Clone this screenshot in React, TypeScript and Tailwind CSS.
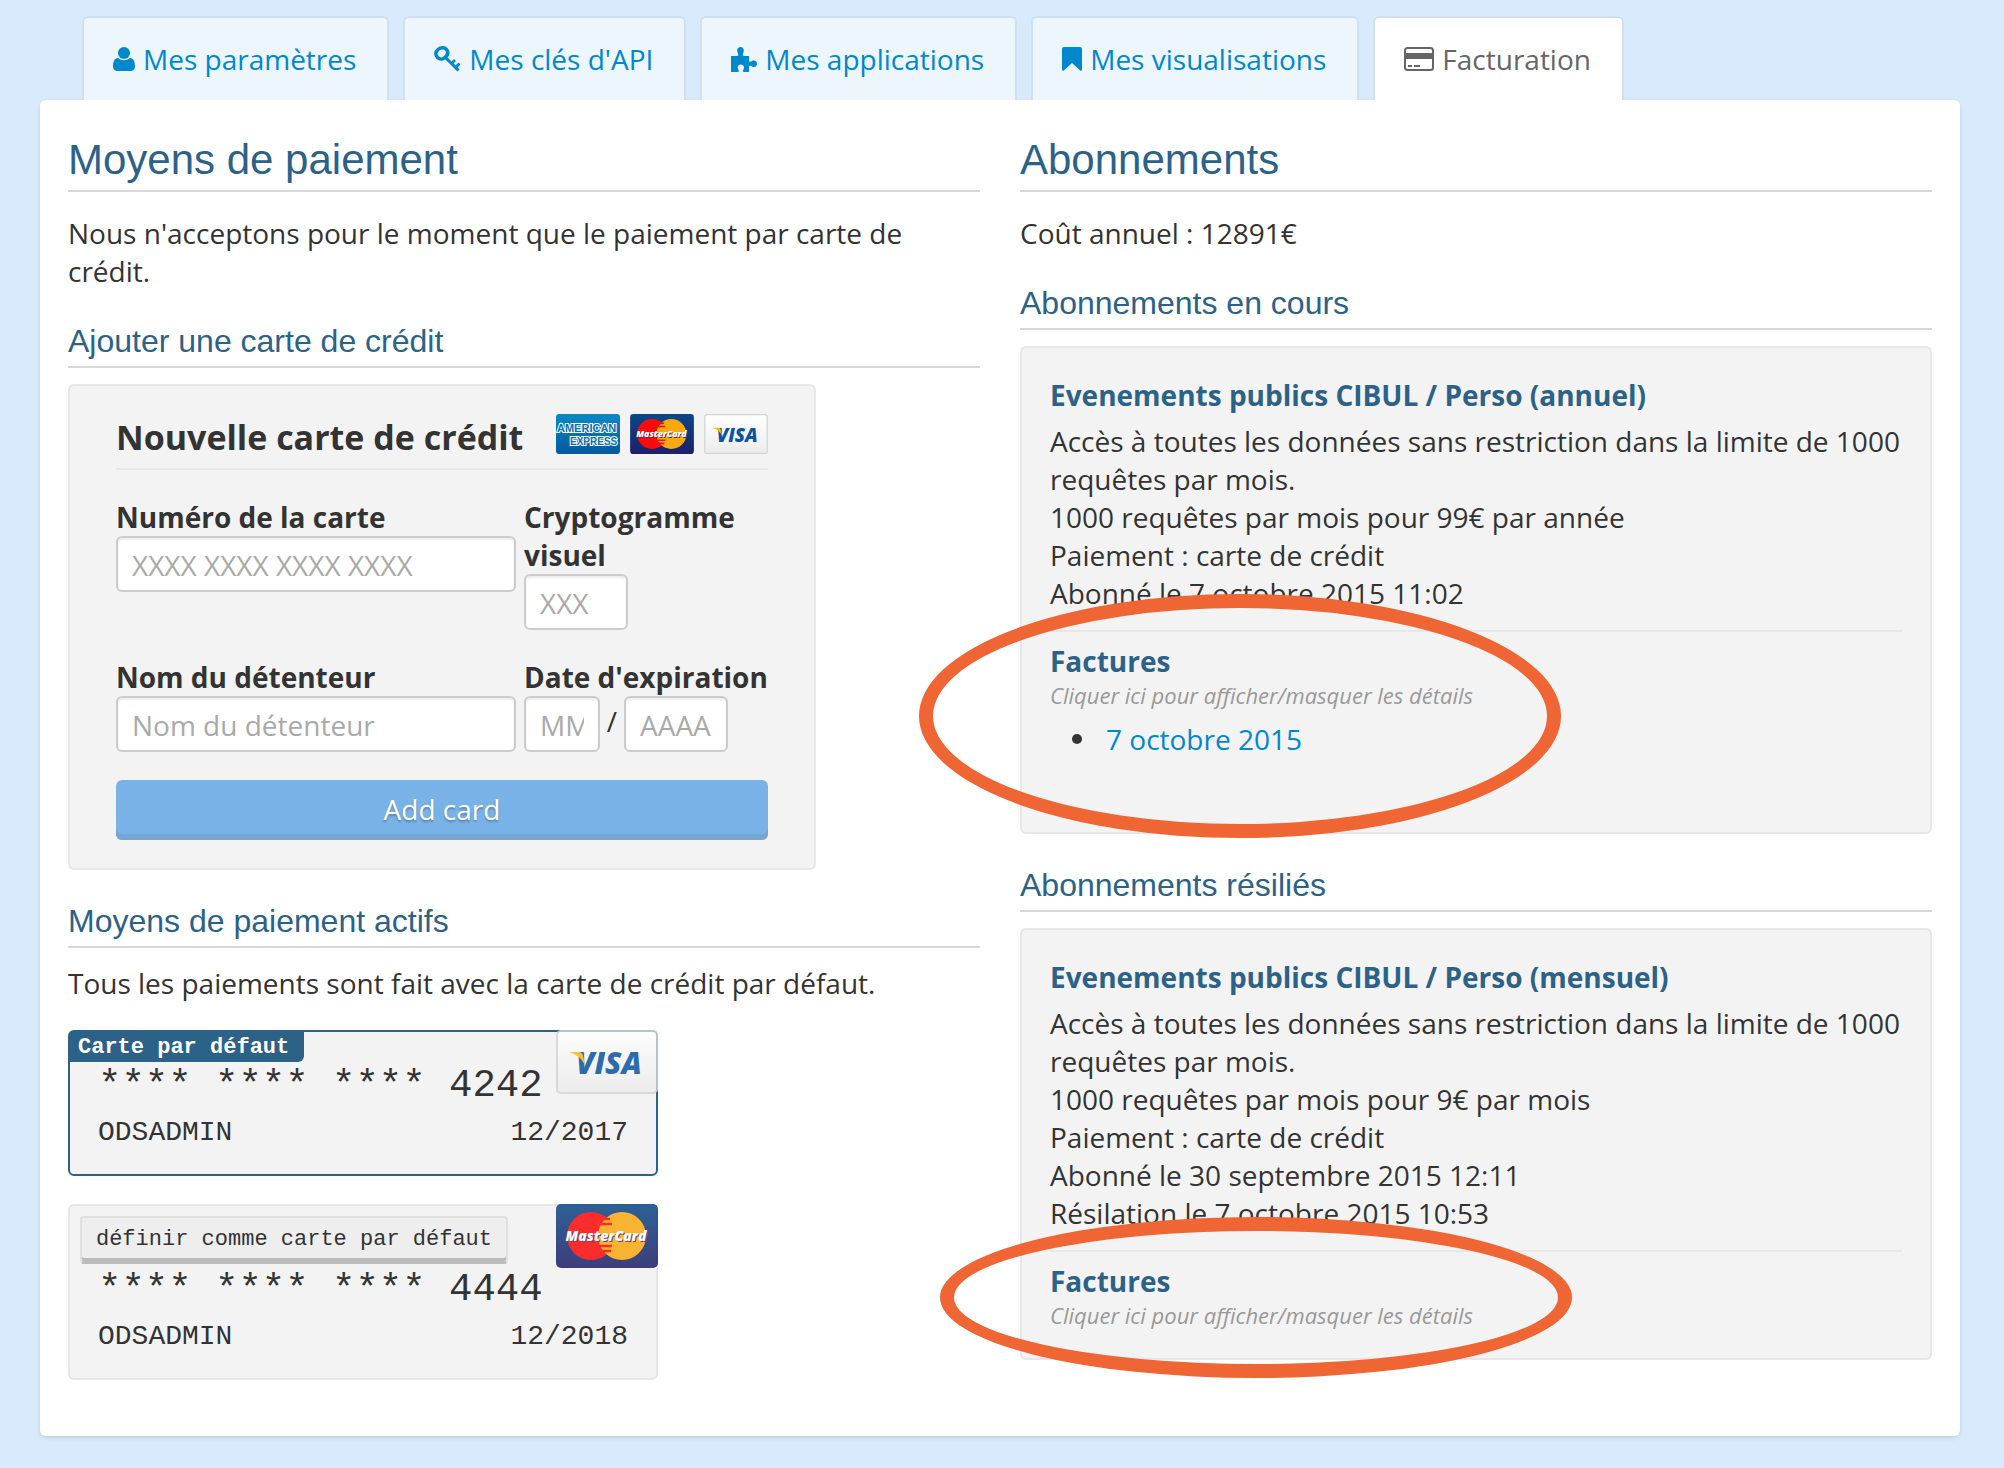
import React from "react";

function VisaLogo({ className }: { className: string }) {
  return (
    <svg viewBox="0 0 102 64" className={className} role="img" aria-label="Visa">
      <defs>
        <linearGradient id="visaBg" x1="0" y1="0" x2="0" y2="1">
          <stop offset="0" stopColor="#ffffff" />
          <stop offset="1" stopColor="#ececec" />
        </linearGradient>
      </defs>
      <rect x="1" y="1" width="100" height="62" rx="4" fill="url(#visaBg)" stroke="#d4d4d4" strokeWidth="2" />
      <text x="20" y="44" fontFamily="Open Sans" fontWeight="800" fontStyle="italic" fontSize="30" fill="#0b55a0">VISA</text>
      <path d="M13 22h10q3 0 4 4l2 9q-5-10-16-13z" fill="#fdb913" />
    </svg>
  );
}

function MasterCardLogo({ className }: { className: string }) {
  return (
    <svg viewBox="0 0 102 64" className={className} role="img" aria-label="MasterCard">
      <defs>
        <linearGradient id="mcBg" x1="0" y1="0" x2="0" y2="1">
          <stop offset="0" stopColor="#0b4788" />
          <stop offset="1" stopColor="#1d1f68" />
        </linearGradient>
      </defs>
      <rect width="102" height="64" rx="5" fill="url(#mcBg)" />
      <circle cx="35" cy="32" r="24" fill="#ff0a0a" />
      <circle cx="66" cy="32" r="24" fill="#f9a910" />
      <path d="M46 15h8M44 20h12M44 42h12M46 47h9" stroke="#ff0a0a" strokeWidth="2.500" />
      <g fontFamily="Open Sans" fontWeight="800" fontStyle="italic" fontSize="14" textAnchor="middle">
        <text x="51" y="38" fill="#5b2a55">MasterCard</text>
        <text x="50" y="37" fill="#fff">MasterCard</text>
      </g>
    </svg>
  );
}

function AmexLogo({ className }: { className: string }) {
  return (
    <svg viewBox="0 0 64 40" className={className} role="img" aria-label="American Express">
      <defs>
        <linearGradient id="amexBg" x1="0" y1="0" x2="0" y2="1">
          <stop offset="0" stopColor="#0a8ac6" />
          <stop offset="1" stopColor="#0558a0" />
        </linearGradient>
      </defs>
      <rect width="64" height="40" rx="3" fill="url(#amexBg)" />
      <g fontFamily="Liberation Sans" fontWeight="700" fill="#0670b2" stroke="#fff" strokeWidth="2" paintOrder="stroke">
        <text x="1" y="18" fontSize="11">AMERICAN</text>
        <text x="14" y="31" fontSize="10">EXPRESS</text>
      </g>
    </svg>
  );
}

function UserIcon() {
  return (
    <svg viewBox="0 0 22 24" className="h-6 w-[22px]" fill="currentColor">
      <ellipse cx="11" cy="6" rx="6" ry="6" />
      <path d="M22 19.600C22 22.200 20.300 24 18.200 24H3.800C1.700 24 0 22.200 0 19.600c0-4.300 1.100-8.600 5.200-8.600 1.300 1.400 3.500 2.200 5.800 2.200s4.500-.8 5.800-2.200c4.100 0 5.200 4.300 5.200 8.600z" />
    </svg>
  );
}

function KeyIcon() {
  return (
    <svg viewBox="0 0 27 26" className="h-[26px] w-[27px]" fill="none" stroke="currentColor" strokeWidth="3">
      <path d="M3.500 11.500C1 9 1.500 5.500 4 3.500S10.500 1 12.500 3.500 13.500 9 11.500 11 6 14 3.500 11.500z" strokeWidth="3.500" />
      <path d="M11 11l13.500 13.500" />
      <path d="M17.500 17.500l3.500-3.500M21.500 21.500l4-4" strokeWidth="2.800" />
    </svg>
  );
}

function PuzzleIcon() {
  return (
    <svg viewBox="0 0 26 25" className="h-[25px] w-[26px]" fill="currentColor">
      <path d="M0 9h5.500c1.500 0 2.200-.8 1.600-2.200C6.600 5.700 6.200 4.800 6.200 3.500 6.200 1.500 7.500 0 9.500 0s3.300 1.500 3.300 3.500c0 1.300-.5 2.200-.9 3.300-.5 1.400.1 2.200 1.600 2.200H18v4.500c0 1.300.8 1.700 2 1.100 1-.5 1.700-1 2.900-1 1.900 0 3.100 1.300 3.100 3.100s-1.200 3.200-3.100 3.200c-1.200 0-1.900-.5-2.900-1-1.200-.6-2-.2-2 1.100V25h-4.800c-1.300 0-1.600-.8-1.100-1.900.4-.9.900-1.500.9-2.600 0-1.800-1.400-2.900-3.200-2.900s-3.100 1.100-3.100 2.900c0 1.100.5 1.700.9 2.600.5 1.100.2 1.900-1.100 1.900H0z" />
    </svg>
  );
}

function BookmarkIcon() {
  return (
    <svg viewBox="0 0 20 24" className="h-6 w-5" fill="currentColor">
      <path d="M2 0h16q2 0 2 2v20.500q0 2-1.800 1L10 16l-8.200 7.500q-1.800 1-1.800-1V2q0-2 2-2z" />
    </svg>
  );
}

function CardIcon() {
  return (
    <svg viewBox="0 0 30 24" className="h-6 w-[30px]" fill="none" stroke="currentColor" strokeWidth="2">
      <rect x="1" y="1" width="28" height="22" rx="2.500" />
      <path d="M1 9h28" strokeWidth="6" />
      <path d="M4 19h4M10 19h6" />
    </svg>
  );
}

const tabs = [
  { label: "Mes paramètres", icon: <UserIcon /> },
  { label: "Mes clés d'API", icon: <KeyIcon /> },
  { label: "Mes applications", icon: <PuzzleIcon /> },
  { label: "Mes visualisations", icon: <BookmarkIcon /> },
  { label: "Facturation", icon: <CardIcon />, active: true },
];

function SubHeading({ children }: { children: React.ReactNode }) {
  return (
    <h3 className="mt-[26px] border-b-2 border-[#d9d9d9] font-['Liberation_Sans',sans-serif] text-[32px] leading-[50px] text-[#2c6288]">
      {children}
    </h3>
  );
}

function Heading({ children }: { children: React.ReactNode }) {
  return (
    <h2 className="border-b-2 border-[#d9d9d9] font-['Liberation_Sans',sans-serif] text-[42px] leading-[60px] text-[#2c6288]">
      {children}
    </h2>
  );
}

const field =
  "h-14 rounded-md border-2 border-[#ccc] bg-white px-3.5 pt-0.5 shadow-[inset_0_2px_2px_rgba(0,0,0,0.075)] placeholder:text-[#aaa]";

function NewCardForm() {
  return (
    <form className="mt-4 w-[748px] max-w-full rounded-md border-2 border-[#e7e7e7] bg-[#f3f3f3] px-[46px] py-7">
      <div className="flex h-14 items-start justify-between border-b-2 border-[#e7e7e7]">
        <h4 className="text-[34px] leading-[46px] font-bold">Nouvelle carte de crédit</h4>
        <div className="flex gap-2.5">
          <AmexLogo className="h-10 w-16" />
          <MasterCardLogo className="h-10 w-16" />
          <VisaLogo className="h-10 w-16" />
        </div>
      </div>
      <div className="mt-7 grid grid-cols-[400px_1fr] items-start gap-x-2 gap-y-7">
        <div className="flex flex-col">
          <label htmlFor="number" className="font-bold">Numéro de la carte</label>
          <input id="number" placeholder="XXXX XXXX XXXX XXXX" className={field} />
        </div>
        <div className="flex flex-col">
          <label htmlFor="cvc" className="font-bold">Cryptogramme visuel</label>
          <input id="cvc" placeholder="XXX" className={field + " w-[104px]"} />
        </div>
        <div className="flex flex-col">
          <label htmlFor="owner" className="font-bold">Nom du détenteur</label>
          <input id="owner" placeholder="Nom du détenteur" className={field} />
        </div>
        <div className="flex flex-col">
          <label htmlFor="month" className="font-bold whitespace-nowrap">Date d'expiration</label>
          <div className="flex">
            <input id="month" placeholder="MM" className={field + " w-[76px]"} />
            <span className="w-6 pt-1.5 text-center">/</span>
            <input aria-label="Année d'expiration" placeholder="AAAA" className={field + " w-[104px]"} />
          </div>
        </div>
      </div>
      <button
        type="button"
        className="mt-7 h-[60px] w-full rounded-md bg-[#78b2e7] pb-0.5 text-white shadow-[inset_0_-6px_0_#78a6d3] [text-shadow:0_2px_2px_rgba(0,0,0,0.25)]"
      >
        Add card
      </button>
    </form>
  );
}

function SavedCard({ last, date, isDefault, logo }: { last: string; date: string; isDefault?: boolean; logo: React.ReactNode }) {
  return (
    <div
      className={
        "relative mt-7 w-[590px] max-w-full rounded-md border-2 bg-[#f3f3f3] font-['Liberation_Mono',monospace] " +
        (isDefault ? "border-[#2c6288]" : "border-[#e7e7e7]")
      }
    >
      {isDefault ? (
        <span className="block h-[30px] w-[234px] rounded-br-md bg-[#2c6288] pl-2 text-[22px] leading-8 font-bold text-white">
          Carte par défaut
        </span>
      ) : (
        <button
          type="button"
          className="mt-2.5 mb-0.5 ml-2.5 block h-12 w-[428px] rounded-sm border-2 border-[#e0e0e0] border-b-[#bbb] bg-[#eee] text-[22px] shadow-[inset_0_-4px_0_#bbb]"
        >
          définir comme carte par défaut
        </button>
      )}
      <div className="absolute -top-0.5 -right-0.5 opacity-85">{logo}</div>
      <div className="px-7 pb-[22px]">
        <p className="text-[39px] leading-[48px]">**** **** **** {last}</p>
        <div className="flex justify-between pt-1 leading-[38px]">
          <span>ODSADMIN</span>
          <span>{date}</span>
        </div>
      </div>
    </div>
  );
}

function Ring({ className }: { className: string }) {
  return <div className={"pointer-events-none absolute rounded-[50%] border-[14px] border-[#ef6534] " + className} />;
}

function Subscription({
  title,
  lines,
  invoices,
  ring,
}: {
  title: string;
  lines: string[];
  invoices: string[];
  ring: string;
}) {
  return (
    <section className="relative mt-4 rounded-md border-2 border-[#e7e7e7] bg-[#f3f3f3] p-7">
      <h4 className="font-bold text-[#2c6288]">{title}</h4>
      <div className="mt-2 border-b-2 border-[#e7e7e7] pb-[18px]">
        {lines.map((line) => (
          <p key={line}>{line}</p>
        ))}
      </div>
      <h4 className="mt-2.5 font-bold text-[#2c6288]">Factures</h4>
      <p className="text-[22px] leading-[30px] text-[#999] italic">Cliquer ici pour afficher/masquer les détails</p>
      {invoices.length > 0 && (
        <ul className="mt-2.5 mb-[46px] pl-[22px]">
          {invoices.map((invoice) => (
            <li key={invoice} className="flex items-center gap-6 before:size-2.5 before:rounded-full before:bg-[#333]">
              <a href="#" className="text-[#0088cc]">{invoice}</a>
            </li>
          ))}
        </ul>
      )}
      <Ring className={ring} />
    </section>
  );
}

export default function App() {
  return (
    <div className="min-h-screen bg-[#d9eafd] pt-4 pr-11 pb-8 pl-10 font-['Open_Sans',sans-serif] text-[28px] leading-[38px] text-[#333]">
      <nav className="flex gap-3.5 pl-[42px]">
        {tabs.map((tab) => (
          <a
            key={tab.label}
            href="#"
            className={
              "flex h-[84px] items-center gap-2 rounded-t-md border-2 border-b-0 border-[#cfe0f1] pr-[31px] pl-[29px] whitespace-nowrap " +
              (tab.active ? "bg-white text-[#666]" : "bg-[#edf5fd] text-[#0088cc]")
            }
          >
            {tab.icon}
            {tab.label}
          </a>
        ))}
      </nav>
      <main className="grid grid-cols-2 gap-x-10 rounded-md bg-white px-7 pt-[30px] pb-14 shadow-[0_2px_4px_rgba(0,0,0,0.1)]">
        <div>
          <Heading>Moyens de paiement</Heading>
          <p className="mt-[22px]">Nous n'acceptons pour le moment que le paiement par carte de crédit.</p>
          <SubHeading>Ajouter une carte de crédit</SubHeading>
          <NewCardForm />
          <SubHeading>Moyens de paiement actifs</SubHeading>
          <p className="mt-4">Tous les paiements sont fait avec la carte de crédit par défaut.</p>
          <SavedCard last="4242" date="12/2017" isDefault logo={<VisaLogo className="h-16 w-[102px]" />} />
          <SavedCard last="4444" date="12/2018" logo={<MasterCardLogo className="h-16 w-[102px]" />} />
        </div>
        <div>
          <Heading>Abonnements</Heading>
          <p className="mt-[22px]">Coût annuel : 12891€</p>
          <SubHeading>Abonnements en cours</SubHeading>
          <Subscription
            title="Evenements publics CIBUL / Perso (annuel)"
            lines={[
              "Accès à toutes les données sans restriction dans la limite de 1000 requêtes par mois.",
              "1000 requêtes par mois pour 99€ par année",
              "Paiement : carte de crédit",
              "Abonné le 7 octobre 2015 11:02",
            ]}
            invoices={["7 octobre 2015"]}
            ring="-bottom-1.5 -left-[103px] h-[244px] w-[642px]"
          />
          <SubHeading>Abonnements résiliés</SubHeading>
          <Subscription
            title="Evenements publics CIBUL / Perso (mensuel)"
            lines={[
              "Accès à toutes les données sans restriction dans la limite de 1000 requêtes par mois.",
              "1000 requêtes par mois pour 9€ par mois",
              "Paiement : carte de crédit",
              "Abonné le 30 septembre 2015 12:11",
              "Résilation le 7 octobre 2015 10:53",
            ]}
            invoices={[]}
            ring="-bottom-5 -left-[82px] h-[161px] w-[632px]"
          />
        </div>
      </main>
    </div>
  );
}
